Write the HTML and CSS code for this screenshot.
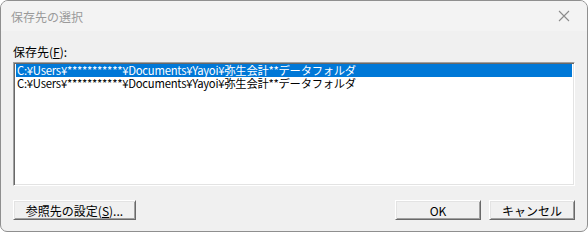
FILE: index.html
```html
<!DOCTYPE html>
<html lang="ja">
<head>
    <meta charset="UTF-8">
    <title>保存先の選択</title>
    <link rel="stylesheet" href="styles.css">
</head>
<body>
    <div class="window">
        <div class="titlebar">
            <span class="title">保存先の選択</span>
            <svg class="close" width="12" height="12" viewBox="0 0 12 12">
                <path d="M1 1 L11 11 M11 1 L1 11" stroke="#8c8c8c" stroke-width="1.1" fill="none"/>
            </svg>
        </div>
        <div class="content">
            <div class="label">保存先(<u>F</u>):</div>
            <div class="listbox">
                <div class="item selected">C:¥Users¥***********¥Documents¥Yayoi¥弥生会計**データフォルダ</div>
                <div class="item">C:¥Users¥***********¥Documents¥Yayoi¥弥生会計**データフォルダ</div>
            </div>
            <div class="buttons">
                <button class="btn btn-wide">参照先の設定(<u>S</u>)...</button>
                <div class="spacer"></div>
                <button class="btn">OK</button>
                <button class="btn">キャンセル</button>
            </div>
        </div>
    </div>
</body>
</html>
```
FILE: styles.css
```css
html, body {
    margin: 0;
    padding: 0;
    background: #ffffff;
}
body {
    font-family: "Noto Sans CJK JP", "Noto Sans", sans-serif;
    font-size: 12px;
    color: #000;
}
.window {
    width: 588px;
    height: 232px;
    box-sizing: border-box;
    border: 1px solid #8f8f8f;
    border-radius: 8px 8px 7px 7px;
    background: #f0f0f0;
    overflow: hidden;
    display: flex;
    flex-direction: column;
}
.titlebar {
    height: 30px;
    flex: none;
    display: flex;
    align-items: center;
    padding: 0 17px 0 10px;
    background: #f3f3f3;
}
.title {
    flex: 1;
    color: #9a9a9a;
    font-size: 12px;
}
.close {
    display: block;
}
.content {
    padding: 13px 12px 0 12px;
}
.label {
    height: 16px;
    line-height: 16px;
    margin-bottom: 2px;
}
.listbox {
    height: 124px;
    box-sizing: border-box;
    background: #ffffff;
    border: 1px solid;
    border-color: #a0a0a0 #ffffff #ffffff #a0a0a0;
    box-shadow: inset 1px 1px 0 #696969, inset -1px -1px 0 #e3e3e3;
    padding: 1px 2px 2px 2px;
}
.item {
    height: 13px;
    line-height: 13px;
    font-size: 11.3px;
    padding-left: 1px;
    white-space: nowrap;
    letter-spacing: -0.25px;
}
.item.selected {
    background: #0078d7;
    color: #ffffff;
}
.buttons {
    display: flex;
    gap: 8px;
    margin-top: 14px;
}
.spacer {
    flex: 1;
}
.btn {
    width: 86px;
    height: 20px;
    box-sizing: border-box;
    padding: 0;
    font-family: inherit;
    font-size: 12px;
    color: #000;
    background: #f0f0f0;
    border: 1px solid;
    border-color: #ffffff #696969 #696969 #ffffff;
    box-shadow: inset 1px 1px 0 #e3e3e3, inset -1px -1px 0 #a0a0a0;
}
.btn-wide {
    width: 123px;
}
```
